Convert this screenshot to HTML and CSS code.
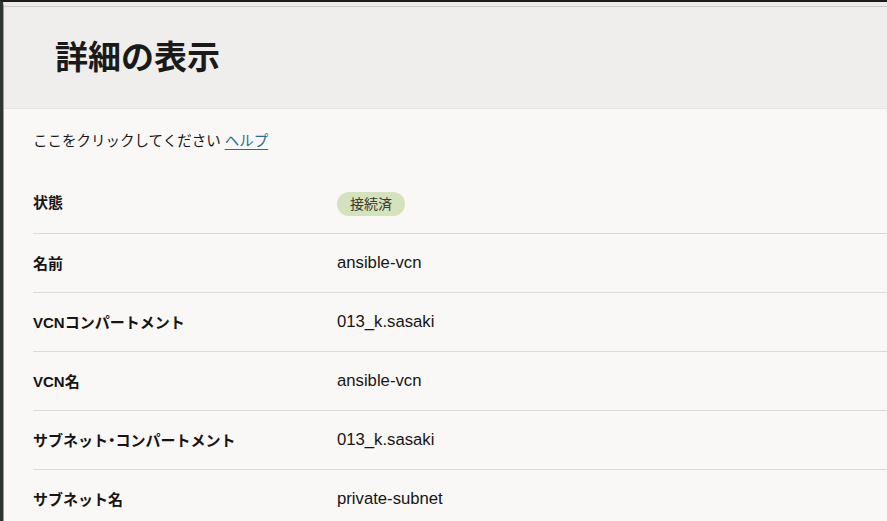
FILE: index.html
```html
<!DOCTYPE html>
<html lang="ja">
<head>
    <meta charset="UTF-8">
    <meta name="viewport" content="width=device-width, initial-scale=1.0">
    <title>詳細の表示</title>
    <link rel="stylesheet" href="styles.css">
</head>
<body>
    <div class="pagina">
        <header class="cabecalho">
            <h1>詳細の表示</h1>
        </header>

        <main class="conteudo">
            <p class="ajuda">ここをクリックしてください <a href="#">ヘルプ</a></p>

            <div class="detalhes">
                <div class="linha">
                    <span class="rotulo rotulo-estado">状態</span>
                    <span class="valor"><span class="selo">接続済</span></span>
                </div>
                <div class="linha">
                    <span class="rotulo">名前</span>
                    <span class="valor">ansible-vcn</span>
                </div>
                <div class="linha">
                    <span class="rotulo">VCNコンパートメント</span>
                    <span class="valor">013_k.sasaki</span>
                </div>
                <div class="linha">
                    <span class="rotulo">VCN名</span>
                    <span class="valor">ansible-vcn</span>
                </div>
                <div class="linha">
                    <span class="rotulo">サブネット<span class="ponto">・</span>コンパートメント</span>
                    <span class="valor">013_k.sasaki</span>
                </div>
                <div class="linha">
                    <span class="rotulo">サブネット名</span>
                    <span class="valor">private-subnet</span>
                </div>
            </div>
        </main>
    </div>
</body>
</html>
```

FILE: styles.css
```css
html, body {
    height: 100%;
}

body {
    margin: 0;
    font-family: 'Liberation Sans', 'Noto Sans CJK JP', sans-serif;
    color: #161513;
    background-color: #f9f8f6;
    border-top: 2px solid #1c1c1c;
    border-left: 3px solid #2e352f;
    overflow: hidden;
}

.pagina {
    border-left: 1px solid #9b9b9b;
    border-top: 4px solid #ebebeb;
    min-height: 100%;
}

.cabecalho {
    height: 101px;
    background-color: #efeeec;
    border-top: 1px solid #cacaca;
    border-bottom: 1px solid #e6e5e2;
    display: flex;
    align-items: center;
    padding-left: 51px;
}

.cabecalho h1 {
    margin: 0;
    font-size: 33px;
    font-weight: 700;
    line-height: 40px;
    color: #1a1a1a;
}

.conteudo {
    padding: 22px 0 0 29px;
}

.ajuda {
    margin: 0 0 24px;
    font-size: 14.5px;
    line-height: 20px;
}

.ajuda a {
    color: #2b6e8f;
    text-decoration: underline;
    text-underline-offset: 3px;
}

.linha {
    display: flex;
    align-items: center;
    height: 58px;
    border-bottom: 1px solid #dcdbd8;
}

.rotulo {
    width: 304px;
    flex-shrink: 0;
    font-size: 15px;
    font-weight: 700;
    margin-top: -2px;
}

.rotulo-estado {
    margin-top: -5px; /* o rótulo fica um pouco acima do selo */
}

.ponto {
    font-feature-settings: "palt";
}

.valor {
    font-size: 16.7px;
}

.selo {
    display: inline-block;
    height: 24px;
    line-height: 24px;
    padding: 0 13px;
    border-radius: 12px;
    background-color: #d4e3bb;
    color: #3a3a38;
    font-size: 14px;
}
```
